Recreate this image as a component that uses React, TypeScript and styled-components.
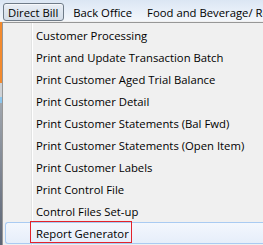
import React from "react";
import styled, { createGlobalStyle } from "styled-components";

const GlobalStyle = createGlobalStyle`
  html, body { margin: 0; padding: 0; background: #f0f0f0; }
  body { font-family: "Segoe UI", "Open Sans", "Noto Sans", sans-serif; }
`;

const Window = styled.div`
  width: 263px;
  height: 245px;
  overflow: hidden;
  display: flex;
  flex-direction: column;
  background: #f0f0f0;
`;

const MenuBar = styled.div`
  height: 21px;
  flex: none;
  display: flex;
  align-items: flex-end;
  gap: 4px;
  padding-left: 3px;
  background: linear-gradient(#dbe6f3 0%, #e6eef8 45%, #f4f7fb 100%);
  border-bottom: 1px solid #f0f0f0;
  overflow: hidden;
`;

const BarItem = styled.div<{ $active?: boolean }>`
  height: 16px;
  flex: none;
  display: flex;
  align-items: center;
  padding: 0 5px 0 4px;
  border: 1px solid ${(p) => (p.$active ? "#6f7b88" : "transparent")};
  border-radius: 3px;
  background: ${(p) =>
    p.$active ? "linear-gradient(#e9eef5, #dde5ee 50%, #d4dde8)" : "transparent"};
  box-shadow: ${(p) => (p.$active ? "inset 0 1px 0 #f6f8fb" : "none")};
  font-size: 11.3px;
  color: #000;
  white-space: nowrap;
`;

const Body = styled.div`
  flex: 1;
  display: flex;
  min-height: 0;
`;

const SideStrip = styled.div`
  width: 2px;
  flex: none;
  background: linear-gradient(
    #f28a2e 0px,
    #f28a2e 61px,
    #cfd2d6 61px,
    #cfd2d6 75px,
    #8cc6ee 75px,
    #8cc6ee 81px,
    #a0a6ae 81px,
    #5b6475 100%
  );
`;

const Dropdown = styled.div`
  flex: 1;
  position: relative;
  border-left: 1px solid #979797;
  border-top: 1px solid #979797;
  padding: 1px 0 0 2px;
  background:
    linear-gradient(to right, transparent 28px, #e2e3e3 28px, #e2e3e3 29px, #ffffff 29px, #ffffff 30px, transparent 30px),
    #f0f0f0;
  background-repeat: no-repeat;
  display: flex;
  flex-direction: column;
`;

const Item = styled.div<{ $hover?: boolean }>`
  position: relative;
  height: 22px;
  box-sizing: border-box;
  display: flex;
  align-items: center;
  padding-left: 31px;
  font-size: 11.3px;
  color: #000;
  white-space: nowrap;
  border: 1px solid ${(p) => (p.$hover ? "#a9cbf2" : "transparent")};
  border-right: none;
  border-radius: 3px 0 0 3px;
  background: ${(p) =>
    p.$hover ? "linear-gradient(#f3f7fd, #e6eefa)" : "transparent"};
`;

const Label = styled.span`
  margin-left: -1px;
`;

const RedBox = styled.span`
  position: absolute;
  left: 24px;
  top: -2px;
  width: 100px;
  height: 20px;
  border: 1px solid #e3232b;
  pointer-events: none;
`;

const items = [
  "Customer Processing",
  "Print and Update Transaction Batch",
  "Print Customer Aged Trial Balance",
  "Print Customer Detail",
  "Print Customer Statements (Bal Fwd)",
  "Print Customer Statements (Open Item)",
  "Print Customer Labels",
  "Print Control File",
  "Control Files Set-up",
];

export default function App() {
  return (
    <>
      <GlobalStyle />
      <Window>
        <MenuBar>
          <BarItem $active>Direct Bill</BarItem>
          <BarItem>Back Office</BarItem>
          <BarItem>Food and Beverage/ Retail</BarItem>
        </MenuBar>
        <Body>
          <SideStrip />
          <Dropdown>
            {items.map((t) => (
              <Item key={t}>
                <Label>{t}</Label>
              </Item>
            ))}
            <Item $hover>
              <Label>Report Generator</Label>
              <RedBox />
            </Item>
          </Dropdown>
        </Body>
      </Window>
    </>
  );
}
